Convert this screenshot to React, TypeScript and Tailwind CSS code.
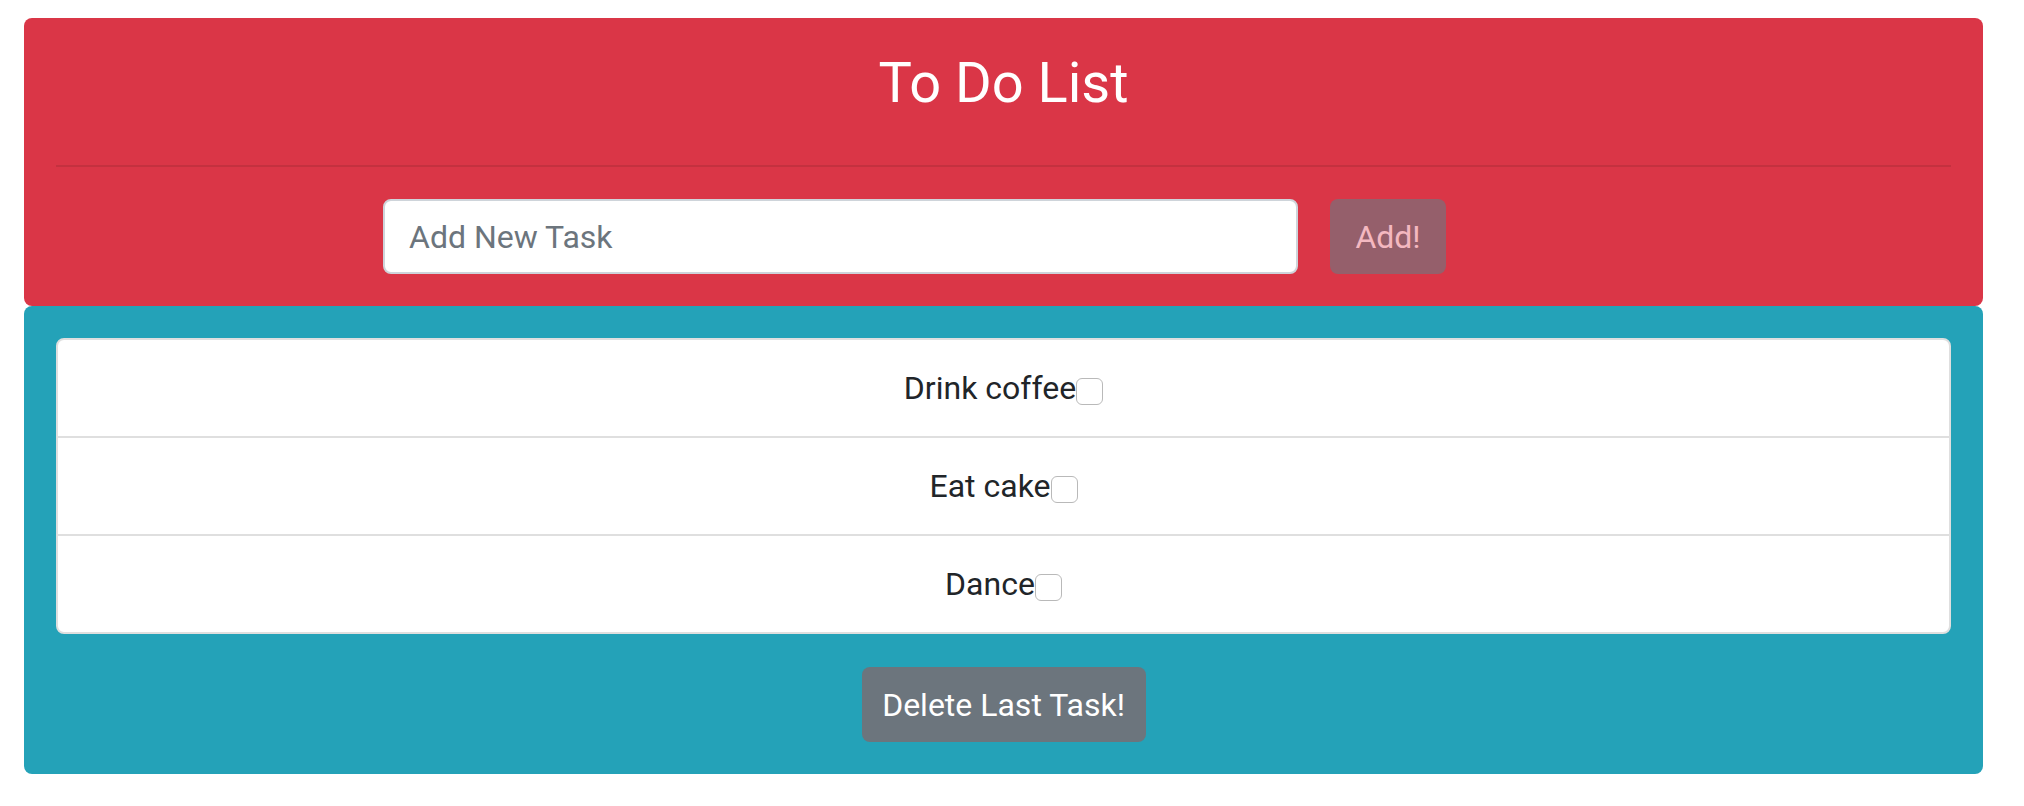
import * as React from "react"

const tasks = ["Drink coffee", "Eat cake", "Dance"]

export default function App() {
  return (
    <div className="font-['Roboto',sans-serif] text-[#212529] pt-[18px] pl-[24px]">
      <div className="w-[1959px]">
        <div className="bg-[#da3647] rounded-[8px] px-[32px] pt-[32px] pb-[32px] flex flex-col">
          <h3 className="text-center text-white text-[56px] leading-[67px] font-normal">To Do List</h3>
          <hr className="mt-[48px] mb-[32px] border-0 border-t-2 border-[#c4313f]" />
          <div className="flex items-center ml-[327px] gap-[32px]">
            <input
              className="w-[915px] h-[75px] bg-white border-2 border-[#ced4da] rounded-[8px] px-[24px] text-[32px] placeholder:text-[#6c757d] outline-none"
              placeholder="Add New Task"
            />
            <button className="w-[116px] h-[75px] rounded-[8px] bg-[#955f6b] text-[#f4b8c0] text-[32px]">Add!</button>
          </div>
        </div>
        <div className="bg-[#24a2b8] rounded-[8px] px-[32px] pt-[32px] pb-[32px] flex flex-col items-center">
          <ul className="w-full bg-white border-2 border-[#dfdfdf] rounded-[8px]">
            {tasks.map((t, i) => (
              <li
                key={t}
                className={
                  "flex justify-center items-center py-[24px] text-[32px] leading-[48px] " +
                  (i > 0 ? "border-t-2 border-[#dfdfdf]" : "")
                }
              >
                <span>{t}</span>
                <span className="w-[27px] h-[27px] mt-[7px] border-[1.5px] border-[#b9b9b9] rounded-[6px] bg-white" />
              </li>
            ))}
          </ul>
          <button className="mt-[33px] w-[284px] h-[75px] rounded-[8px] bg-[#6c757d] text-white text-[32px]">
            Delete Last Task!
          </button>
        </div>
      </div>
    </div>
  )
}
